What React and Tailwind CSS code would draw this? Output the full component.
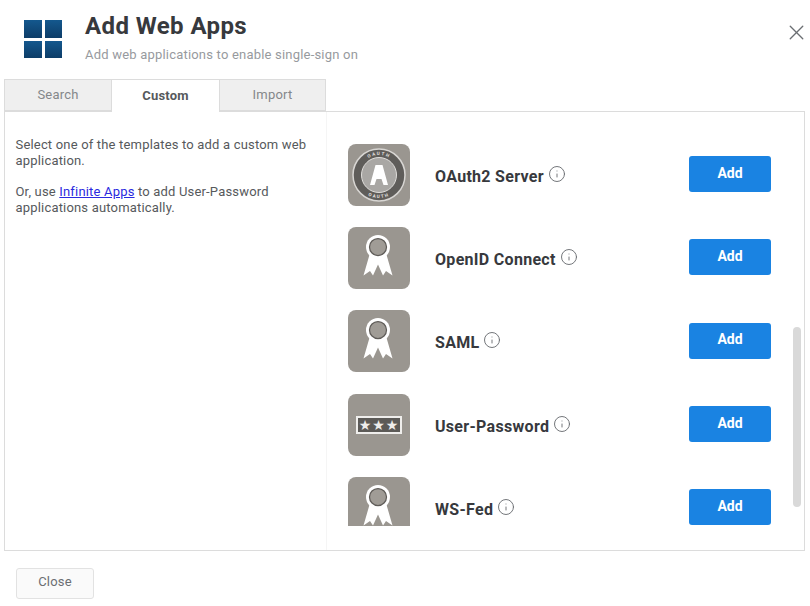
import React from 'react'
import { Info, X } from 'lucide-react'

const apps = [
  { name: 'OAuth2 Server', icon: 'oauth' },
  { name: 'OpenID Connect', icon: 'ribbon' },
  { name: 'SAML', icon: 'ribbon' },
  { name: 'User-Password', icon: 'password' },
  { name: 'WS-Fed', icon: 'ribbon' },
]

const RibbonIcon = () => (
  <svg viewBox="0 0 62 62" className="w-[62px] h-[62px]">
    <path d="M22 26 L15.5 48.5 L22 44 L25 48.5 L30 37.5 L35 48.5 L38 44 L44.5 48.5 L38 26 Z" fill="#fff" />
    <circle cx="30" cy="20" r="12" fill="#fff" />
    <circle cx="30" cy="20" r="8.5" fill="#a09c96" stroke="#5f5c58" strokeWidth="1.25" />
  </svg>
)

const OauthIcon = () => (
  <svg viewBox="0 0 62 62" className="w-[62px] h-[62px]">
    <circle cx="31" cy="31" r="26" fill="#5f5d5a" stroke="#d8d6d3" strokeWidth="1.5" />
    <circle cx="31" cy="31" r="17.5" fill="#a9a7a4" stroke="#e0dedb" strokeWidth="1" />
    <path d="M27.5 21 H34.5 L40 41 H35.5 L33.5 35 H28.5 L26.5 41 H22 Z" fill="#fff" />
    <path id="oauth-top" d="M11 31 A20 20 0 0 1 51 31" fill="none" />
    <text fontSize="4.5" fontWeight="700" fill="#e5e3e0" letterSpacing="1.5" fontFamily="Roboto, sans-serif">
      <textPath href="#oauth-top" startOffset="50%" textAnchor="middle">OAUTH</textPath>
    </text>
    <path id="oauth-bottom" d="M8 31 A23 23 0 0 0 54 31" fill="none" />
    <text fontSize="4.5" fontWeight="700" fill="#e5e3e0" letterSpacing="1.5" fontFamily="Roboto, sans-serif">
      <textPath href="#oauth-bottom" startOffset="50%" textAnchor="middle">OAUTH</textPath>
    </text>
  </svg>
)

const PasswordIcon = () => (
  <div className="w-[46px] h-[18px] border-2 border-[#efeeec] bg-[#5c5a57] flex items-center justify-center text-[#eeecea] text-[14px] leading-none tracking-[1px] font-['DejaVu_Sans',sans-serif]">
    ★★★
  </div>
)

const AppIcon = ({ type }) => (
  <div className="w-[62px] h-[62px] shrink-0 rounded-lg bg-[#9a9690] flex items-center justify-center">
    {type === 'oauth' && <OauthIcon />}
    {type === 'ribbon' && <RibbonIcon />}
    {type === 'password' && <PasswordIcon />}
  </div>
)

const AppRow = ({ app }) => (
  <div className="h-[83.33px] shrink-0 flex items-center pl-[21px] pr-[33px]">
    <AppIcon type={app.icon} />
    <div className="ml-[25px] flex-1 flex items-center gap-[4px] text-base font-bold tracking-[0.3px] text-[#37393d]">
      <span className="pt-[4px]">{app.name}</span>
      <Info className="w-[18px] h-[18px] mb-[2px] text-[#6b6e72]" strokeWidth={1.25} />
    </div>
    <button className="w-[82px] h-9 mb-[1px] rounded-[3px] bg-[#1a83e2] pb-[3px] text-sm font-bold text-white">
      Add
    </button>
  </div>
)

const App = () => {
  return (
    <div className="w-[810px] h-[606px] overflow-hidden bg-white font-['Roboto',sans-serif]">
      {/* Header */}
      <div className="h-[79px] flex items-start pl-[24px] pr-[1px]">
        <div className="mt-[20px] w-[38px] h-[38px] grid grid-cols-2 gap-[3px] shrink-0">
          {[0, 1, 2, 3].map((i) => (
            <div key={i} className="bg-gradient-to-b from-[#14588e] to-[#0d3d68]"></div>
          ))}
        </div>
        <div className="ml-[23px] flex-1">
          <h1 className="mt-[11px] text-2xl leading-[31px] font-bold tracking-[0.4px] text-[#37393d]">Add Web Apps</h1>
          <p className="mt-[5px] text-[13px] leading-4 tracking-[0.2px] text-[#979a9e]">Add web applications to enable single-sign on</p>
        </div>
        <X className="mt-[20px] w-[25px] h-[25px] text-[#6b6e72]" strokeWidth={1.3} />
      </div>

      {/* Tabs */}
      <div className="ml-1 flex h-[33px] relative z-10 text-[13px] tracking-[0.2px]">
        <div className="w-[108px] h-[32px] bg-[#efefef] border border-[#dcdcdc] flex items-center justify-center text-[#84878a]">Search</div>
        <div className="w-[107px] h-[33px] bg-white border-t border-[#dcdcdc] flex items-center justify-center pb-[1px] font-bold text-[#56595c]">Custom</div>
        <div className="w-[107px] h-[32px] bg-[#efefef] border border-[#dcdcdc] flex items-center justify-center text-[#84878a]">Import</div>
      </div>

      {/* Panel */}
      <div className="ml-1 mt-[-1px] w-[801px] h-[440px] border border-[#dcdcdc] flex relative">
        <div className="w-[322px] border-r border-[#f5f5f5] pl-[10.5px] pt-[25px] pr-3 text-[13px] leading-4 tracking-[0.18px] text-[#56595c]">
          <p>Select one of the templates to add a custom web application.</p>
          <p className="mt-[15px]">
            Or, use <a href="#" className="text-[#2a2ae0] underline">Infinite Apps</a> to add User-Password applications automatically.
          </p>
        </div>
        <div className="flex-1 h-[414px] overflow-hidden flex flex-col pt-[21px]">
          {apps.map((app) => (
            <AppRow key={app.name} app={app} />
          ))}
        </div>
        <div className="absolute right-[3px] top-[215px] w-2 h-[180px] rounded bg-[#d9d9d9]"></div>
      </div>

      {/* Footer */}
      <div className="pl-4 pt-[17px]">
        <button className="w-[78px] h-[31px] rounded-[3px] border border-[#e2e2e2] bg-[#fafafa] pb-[3px] text-[13px] tracking-[0.2px] text-[#6b6e72]">
          Close
        </button>
      </div>
    </div>
  )
}

export default App
